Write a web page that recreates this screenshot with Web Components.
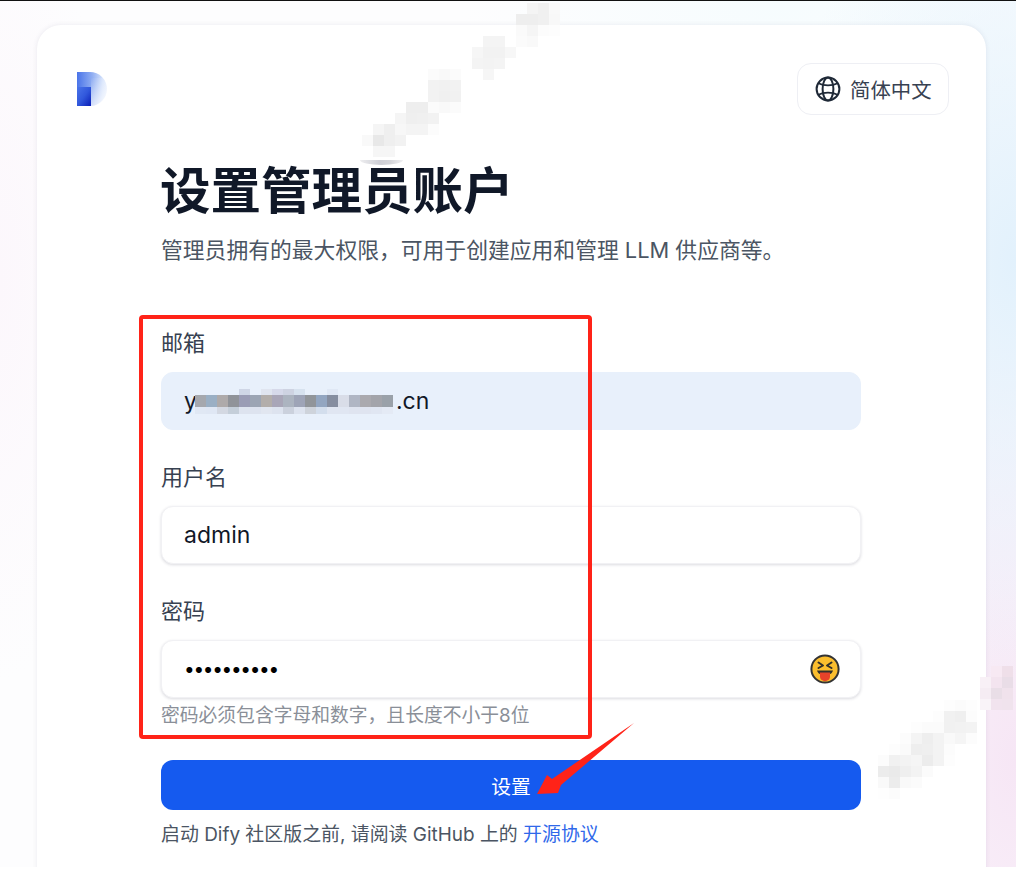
<!DOCTYPE html>
<html lang="zh">
<head>
<meta charset="utf-8">
<title>设置管理员账户</title>
<style>
html, body {
    margin: 0;
    background: #fff;
    font-family: Inter, "Noto Sans CJK SC", sans-serif;
}
</style>
</head>
<body>
<setup-shell>
    <setup-card>
        <lang-button slot="lang">简体中文</lang-button>
        <setup-field label="邮箱" variant="filled">y<mosaic-patch inline cell="11" width="201" height="25" cells="email"></mosaic-patch>.cn</setup-field>
        <setup-field label="用户名">admin</setup-field>
        <setup-field label="密码" hint="密码必须包含字母和数字，且长度不小于8位" secret>••••••••••</setup-field>
        <primary-button>设置</primary-button>
    </setup-card>
    <markup-layer slot="overlay"></markup-layer>
</setup-shell>

<script>
const setupShellTemplate = document.createElement('template')

setupShellTemplate.innerHTML = `
<style>
:host {
    display: block;
    position: relative;
    width: 1016px;
    height: 867px;
    overflow: hidden;
    box-sizing: border-box;
    border-top: 1px solid #111;
    padding: 24px 30px 0 37px;
    background:
        radial-gradient(ellipse 240px 420px at 100% 260px, #e2f1fc 0%, rgba(230, 244, 252, 0) 100%),
        radial-gradient(ellipse 230px 480px at 100% 760px, #f6e6f5 0%, rgba(246, 230, 245, 0) 100%),
        radial-gradient(ellipse 320px 180px at 780px 0, #f6fcfe 0%, rgba(246, 252, 254, 0) 100%),
        radial-gradient(ellipse 110px 400px at 0 280px, #fcf7fc 0%, rgba(252, 247, 252, 0) 100%),
        #fdfdfe;
}
</style>
<slot></slot>
<slot name="overlay"></slot>`

class SetupShell extends HTMLElement {
    constructor() {
        super()
        this.attachShadow({mode: 'open'})
        this.shadowRoot.appendChild(setupShellTemplate.content.cloneNode(true))
    }
}

const setupCardTemplate = document.createElement('template')

setupCardTemplate.innerHTML = `
<style>
* {
    box-sizing: border-box;
    margin: 0;
}

:host {
    display: block;
    height: 1000px;
    padding: 38px 37px 0 40px;
    background: #fff;
    border-radius: 24px;
    box-shadow: 0 0 5px rgba(70, 70, 110, .11);
}

header {
    display: flex;
    justify-content: space-between;
    align-items: flex-start;
}

.logo {
    display: block;
    margin-top: 9px;
}

main {
    width: 700px;
    margin: 46px 0 0 84px;
}

h1 {
    margin-left: -1px;
    font-size: 50.5px;
    line-height: 60px;
    font-weight: 700;
    color: #101828;
    white-space: nowrap;
}

.subtitle {
    margin: 14px 0 63px;
    font-size: 21.8px;
    line-height: 30px;
    color: #4b5563;
    white-space: nowrap;
}

.fields {
    display: flex;
    flex-direction: column;
    gap: 32px;
}

.legal {
    margin-top: 12px;
    font-size: 18.93px;
    line-height: 26px;
    color: #4b5563;
    white-space: nowrap;
}

.legal a {
    color: #2f68ea;
    text-decoration: none;
}

::slotted(primary-button) {
    margin-top: 31px;
}
</style>
<header>
    <svg class="logo" width="30" height="34" viewBox="0 0 30 34">
        <defs>
            <linearGradient id="top" x1="0" y1="0" x2="1" y2="0">
                <stop offset="0" stop-color="#4a74e9"/>
                <stop offset=".5" stop-color="#8fadf2"/>
                <stop offset=".85" stop-color="#d3e1fb"/>
                <stop offset="1" stop-color="#e6eefd"/>
            </linearGradient>
            <linearGradient id="stem" x1="0" y1="0" x2="1" y2="1">
                <stop offset="0" stop-color="#4a74e9"/>
                <stop offset=".5" stop-color="#3158dc"/>
                <stop offset="1" stop-color="#0a1eb6"/>
            </linearGradient>
            <linearGradient id="fade" x1="0" y1="0" x2="0.3" y2="1">
                <stop offset="0" stop-color="#fff" stop-opacity="0"/>
                <stop offset="1" stop-color="#fff" stop-opacity=".7"/>
            </linearGradient>
        </defs>
        <path d="M0 0H13a17 17 0 0 1 0 34H0Z" fill="url(#top)"/>
        <path d="M14 6H27.500A17 17 0 0 1 13 34H14Z" fill="url(#fade)"/>
        <rect x="0" y="15" width="14" height="19" fill="url(#stem)"/>
    </svg>
    <slot name="lang"></slot>
</header>
<main>
    <h1>设置管理员账户</h1>
    <p class="subtitle">管理员拥有的最大权限，可用于创建应用和管理 LLM 供应商等。</p>
    <div class="fields"><slot></slot></div>
    <slot name="action"></slot>
    <p class="legal">启动 Dify 社区版之前, 请阅读 GitHub 上的 <a href="#">开源协议</a></p>
</main>`

class SetupCard extends HTMLElement {
    constructor() {
        super()
        this.attachShadow({mode: 'open'})
        this.shadowRoot.appendChild(setupCardTemplate.content.cloneNode(true))
    }

    connectedCallback() {
        const button = this.querySelector('primary-button')
        if (button) {
            button.setAttribute('slot', 'action')
        }
    }
}

const langButtonTemplate = document.createElement('template')

langButtonTemplate.innerHTML = `
<style>
:host {
    display: flex;
    align-items: center;
    gap: 9px;
    box-sizing: border-box;
    width: 152px;
    height: 52px;
    padding-left: 17px;
    border: 1px solid #eeeff4;
    border-radius: 14px;
    background: #fff;
    font-size: 20.4px;
    color: #374151;
    white-space: nowrap;
}
</style>
<svg width="26" height="26" viewBox="0 0 26 26" fill="none" stroke="#1f2937" stroke-width="2">
    <circle cx="13" cy="13" r="11.4"/>
    <ellipse cx="13" cy="13" rx="5.4" ry="11.4"/>
    <path d="M3.4 7.2C8.6 10 17.4 10 22.6 7.2" stroke-width="1.7"/>
    <path d="M3.4 18.8C8.6 16 17.4 16 22.6 18.8" stroke-width="1.7"/>
</svg>
<slot></slot>`

class LangButton extends HTMLElement {
    constructor() {
        super()
        this.attachShadow({mode: 'open'})
        this.shadowRoot.appendChild(langButtonTemplate.content.cloneNode(true))
    }
}

const setupFieldTemplate = document.createElement('template')

setupFieldTemplate.innerHTML = `
<style>
* {
    box-sizing: border-box;
    margin: 0;
}

:host {
    display: block;
}

label {
    display: block;
    margin-bottom: 14px;
    font-size: 22px;
    line-height: 30px;
    color: #374151;
}

.box {
    display: flex;
    align-items: center;
    justify-content: space-between;
    height: 58px;
    padding: 0 20px 0 22px;
    border: 1px solid #f1f1f4;
    border-radius: 12px;
    background: #fff;
    box-shadow: 0 1px 3px rgba(30, 30, 60, .16);
    font-size: 23px;
    color: #111827;
}

:host([variant="filled"]) .box {
    background: #e8f0fb;
    border-color: #e8f0fb;
    box-shadow: none;
}

:host([secret]) .value {
    font-size: 19px;
    letter-spacing: -1.3px;
    color: #000;
}

.value {
    display: flex;
    align-items: center;
    white-space: nowrap;
}

.eye {
    display: none;
}

:host([secret]) .eye {
    display: block;
}

.hint {
    display: none;
    margin-top: 5px;
    font-size: 18.8px;
    line-height: 26px;
    color: #8a8f98;
    white-space: nowrap;
}

:host([hint]) .hint {
    display: block;
}

::slotted(mosaic-patch) {
    margin: 0 0 0 -2px;
}
</style>
<label></label>
<div class="box">
    <span class="value"><slot></slot></span>
    <svg class="eye" width="30" height="30" viewBox="0 0 30 30">
        <circle cx="15" cy="15" r="13.6" fill="#fbbe2e" stroke="#333" stroke-width="2"/>
        <path d="M8.5 8.5 13 11.5 8.5 14" fill="none" stroke="#33302a" stroke-width="2" stroke-linecap="round" stroke-linejoin="round"/>
        <path d="M21.5 8.5 17 11.5 21.5 14" fill="none" stroke="#33302a" stroke-width="2" stroke-linecap="round" stroke-linejoin="round"/>
        <path d="M7 16.5H23C22.5 18.5 21 19.8 20 20H10C9 19.8 7.5 18.5 7 16.5Z" fill="#33302a"/>
        <path d="M10 18.5H20V22.5C20 25.5 17.5 27 15 27S10 25.5 10 22.5Z" fill="#e8432a"/>
    </svg>
</div>
<p class="hint"></p>`

class SetupField extends HTMLElement {
    constructor() {
        super()
        this.attachShadow({mode: 'open'})
        this.shadowRoot.appendChild(setupFieldTemplate.content.cloneNode(true))
    }

    connectedCallback() {
        this.shadowRoot.querySelector('label').textContent = this.getAttribute('label')
        this.shadowRoot.querySelector('.hint').textContent = this.getAttribute('hint') || ''
    }
}

const primaryButtonTemplate = document.createElement('template')

primaryButtonTemplate.innerHTML = `
<style>
:host {
    display: flex;
    align-items: center;
    justify-content: center;
    height: 50px;
    border-radius: 12px;
    background: #155aef;
    color: #fff;
    font-size: 19.8px;
}
</style>
<slot></slot>`

class PrimaryButton extends HTMLElement {
    constructor() {
        super()
        this.attachShadow({mode: 'open'})
        this.shadowRoot.appendChild(primaryButtonTemplate.content.cloneNode(true))
    }
}

// pixelated smudges copied off the screenshot: [col, row, colour]
const mosaics = {
    email: [
        [4,0,'#cfd6e6'],[6,0,'#e0e5f0'],[7,0,'#d6d9ea'],[8,0,'#ced3e2'],[9,0,'#d7e2ef'],[12,0,'#e0e8f5'],
        [0,1,'#a5a8ae'],[1,1,'#9aafc4'],[2,1,'#aeaaaa'],[3,1,'#909399'],[4,1,'#9a9cb5'],[5,1,'#9ca5b4'],
        [6,1,'#b3aeab'],[7,1,'#a9a6b8'],[8,1,'#acb4c0'],[9,1,'#9ea4b7'],[10,1,'#91959a'],[11,1,'#93a6c1'],
        [12,1,'#868ea0'],[13,1,'#d9dde8'],[14,1,'#b0b6c4'],[15,1,'#aaa9ae'],[16,1,'#a3a4aa'],[17,1,'#9aa1a9'],
        [0,2,'#e0e8f4'],[1,2,'#dfe7f4'],[2,2,'#d3d8e2'],[3,2,'#c4ced9'],[4,2,'#dde3ef'],[5,2,'#dde3ef'],
        [6,2,'#e1e6f0'],[7,2,'#dde3ef'],[8,2,'#cbd1dd'],[9,2,'#dde3ef'],[10,2,'#ced3db'],[11,2,'#d3deed'],
        [12,2,'#e0e6f2'],[13,2,'#e0e6f2'],[14,2,'#dfe4f0'],[15,2,'#dfe4f0'],[16,2,'#e0e6f2'],[17,2,'#e4eaf5']
    ],
    top: [
        [15,0,'#f4f4f4'],[16,0,'#f0f0f0'],[17,0,'#f9f9f9'],
        [14,1,'#eeeeee'],[15,1,'#eeeeee'],[16,1,'#f0f0f0'],[17,1,'#f8f8f8'],
        [14,2,'#fafafa'],[15,2,'#f5f5f5'],[16,2,'#fcfcfc'],[17,2,'#fdfdfd'],
        [11,3,'#f4f4f4'],[12,3,'#f4f4f4'],[14,3,'#fbfbfb'],[15,3,'#f9f9f9'],
        [10,4,'#f6f6f6'],[11,4,'#f2f2f2'],[12,4,'#f2f2f2'],[13,4,'#f7f7f7'],
        [10,5,'#f4f4f4'],[11,5,'#f3f3f3'],[12,5,'#f4f4f4'],[11,6,'#f6f6f6'],
        [6,6,'#fbfbfb'],[7,6,'#f9f9f9'],[8,6,'#fbfbfb'],
        [6,7,'#f2f2f2'],[7,7,'#f1f1f1'],[8,7,'#f2f2f2'],
        [6,8,'#f2f2f2'],[7,8,'#f0f0f0'],[8,8,'#f1f1f1'],
        [4,9,'#eeeeee'],[5,9,'#eeeeee'],[6,9,'#fbfbfb'],[7,9,'#f9f9f9'],[8,9,'#fbfbfb'],
        [3,10,'#f5f5f5'],[4,10,'#efefef'],[5,10,'#f0f0f0'],[6,10,'#f2f2f2'],
        [1,11,'#f5f5f5'],[2,11,'#efefef'],[3,11,'#f7f7f7'],[4,11,'#f4f4f4'],[5,11,'#f4f4f4'],[6,11,'#fcfcfc'],
        [0,12,'#f9f9f9'],[1,12,'#e8e8e8'],[2,12,'#efefef'],[3,12,'#f2f2f2'],
        [1,13,'#f6f6f6'],[2,13,'#f6f6f6']
    ],
    bottom: [
        [6,0,'#fdfdfd'],[7,0,'#fbfbfb'],[8,0,'#fdfdfd'],
        [5,1,'#fdfdfd'],[6,1,'#f1f1f1'],[7,1,'#efefef'],[8,1,'#fcfcfc'],
        [3,2,'#fdfdfd'],[4,2,'#fbfbfb'],[5,2,'#fbfbfb'],[6,2,'#f1f1f1'],[7,2,'#f2f2f2'],[8,2,'#f3f3f3'],
        [2,3,'#fcfcfc'],[3,3,'#f4f4f4'],[4,3,'#eeeeee'],[5,3,'#f3f3f3'],[6,3,'#f9f9f9'],[7,3,'#f5f5f5'],[8,3,'#fcfcfc'],
        [1,4,'#fdfdfd'],[2,4,'#fafafa'],[3,4,'#eeeeee'],[4,4,'#efefef'],[5,4,'#f3f3f3'],[6,4,'#fcfcfc'],
        [0,5,'#fcfcfc'],[1,5,'#f1f1f1'],[2,5,'#f3f3f3'],[3,5,'#f5f5f5'],[4,5,'#ececec'],[5,5,'#f3f3f3'],[6,5,'#fdfdfd'],
        [0,6,'#ececec'],[1,6,'#eaeaea'],[2,6,'#efefef'],[3,6,'#f3f3f3'],[4,6,'#fbfbfb'],
        [0,7,'#f9f9f9'],[1,7,'#ececec'],[2,7,'#f9f9f9'],[3,7,'#fbfbfb'],
        [0,8,'#fefefe'],[1,8,'#fcfcfc']
    ],
    edge: [
        [1,0,'#f7e9f3'],[2,0,'#efdfe9'],
        [0,1,'#f8f0f6'],[1,1,'#f3e4ef'],[2,1,'#e9dde7'],
        [0,2,'#f5ecf3'],[1,2,'#e9dee7'],[2,2,'#f0e2ec'],
        [0,3,'#f9f3f8'],[1,3,'#f1e3ee'],[2,3,'#f0e3ed']
    ]
}

class MosaicPatch extends HTMLElement {
    constructor() {
        super()
        this.attachShadow({mode: 'open'})
    }

    connectedCallback() {
        const size = Number(this.getAttribute('cell')) || 11
        const width = this.getAttribute('width')
        const height = this.getAttribute('height')
        const isEmail = this.getAttribute('cells') === 'email'
        const rects = mosaics[this.getAttribute('cells')].map(([col, row, colour]) => {
            // the email smudge has short top and bottom rows
            const y = isEmail ? [0, 6, 18][row] : row * size
            const h = isEmail ? [6, 12, 7][row] : size
            return `<rect x="${col * size}" y="${y}" width="${size}" height="${h}" fill="${colour}"/>`
        }).join('')

        this.shadowRoot.innerHTML = `
        <style>
        :host { display: block; line-height: 0; }
        :host([inline]) { display: inline-block; flex: none; }
        </style>
        <svg width="${width}" height="${height}" shape-rendering="crispEdges">${rects}</svg>`
    }
}

const markupLayerTemplate = document.createElement('template')

markupLayerTemplate.innerHTML = `
<style>
:host {
    position: absolute;
    inset: 0;
    pointer-events: none;
}

.frame {
    position: absolute;
    left: 139px;
    top: 314px;
    width: 453px;
    height: 424px;
    box-sizing: border-box;
    border: 4.5px solid #ff2318;
    border-radius: 4px;
}

.arrow, .patch, .smear {
    position: absolute;
}

.patch-top { left: 362px; top: 2px; }
.patch-bottom { left: 878px; top: 699px; }
.patch-edge { left: 980px; top: 665px; }

.smear {
    left: 360px;
    top: 159px;
    width: 43px;
    height: 5px;
    background: linear-gradient(90deg, #eeeef0, #cdced5 45%, #d4d5da 70%, #f0f0f2);
    border-radius: 0 0 50% 50% / 0 0 100% 100%;
}
</style>
<mosaic-patch class="patch patch-top" cells="top" width="200" height="160"></mosaic-patch>
<div class="smear"></div>
<mosaic-patch class="patch patch-bottom" cells="bottom" width="110" height="110"></mosaic-patch>
<mosaic-patch class="patch patch-edge" cells="edge" width="36" height="48"></mosaic-patch>
<div class="frame"></div>
<svg class="arrow" style="left:0;top:-1px" width="1016" height="867">
    <polygon fill="#ff2318" points="537,794 547,775 552,779 634,723 561,785 558,793"/>
</svg>`

class MarkupLayer extends HTMLElement {
    constructor() {
        super()
        this.attachShadow({mode: 'open'})
        this.shadowRoot.appendChild(markupLayerTemplate.content.cloneNode(true))
    }
}

customElements.define('setup-shell', SetupShell)
customElements.define('setup-card', SetupCard)
customElements.define('lang-button', LangButton)
customElements.define('setup-field', SetupField)
customElements.define('primary-button', PrimaryButton)
customElements.define('mosaic-patch', MosaicPatch)
customElements.define('markup-layer', MarkupLayer)
</script>
</body>
</html>
